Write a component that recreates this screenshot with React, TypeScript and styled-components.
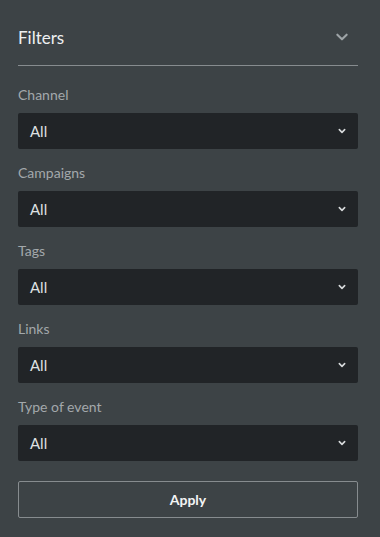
import React from 'react'
import styled, { createGlobalStyle } from 'styled-components'

const GlobalStyle = createGlobalStyle`
  html, body {
    margin: 0;
    padding: 0;
    background: #3d4346;
  }
  body {
    font-family: Lato, "Open Sans", sans-serif;
  }
`

const Panel = styled.div`
  box-sizing: border-box;
  width: 380px;
  min-height: 537px;
  padding: 20px 22px 0 18px;
  background: #3d4346;
`
const Header = styled.div`
  display: flex;
  align-items: center;
  justify-content: space-between;
  height: 34px;
  padding-bottom: 11px;
  border-bottom: 1px solid #878c8f;
`
const Title = styled.h2`
  margin: 0;
  font-size: 17px;
  font-weight: 400;
  color: #eef0f1;
`
const CollapseButton = styled.button`
  display: flex;
  align-items: center;
  justify-content: center;
  width: 24px;
  height: 24px;
  margin-right: 4px;
  padding: 0;
  border: 0;
  background: none;
  color: #9ea4a7;
`
const Fields = styled.div`
  display: flex;
  flex-direction: column;
  gap: 14px;
  padding-top: 19px;
`
const Field = styled.div`
  display: flex;
  flex-direction: column;
  gap: 8px;
`
const Label = styled.label`
  height: 20px;
  line-height: 20px;
  font-size: 14px;
  color: #a3a8ab;
`
const Select = styled.div`
  display: flex;
  align-items: center;
  justify-content: space-between;
  height: 36px;
  padding: 0 12px;
  background: #212427;
  border-radius: 2px;
  font-size: 15px;
  color: #dfe1e2;
`
const Apply = styled.button`
  display: block;
  width: 100%;
  height: 37px;
  margin-top: 20px;
  border: 1px solid #878c8f;
  border-radius: 2px;
  background: transparent;
  font-family: Lato, "Open Sans", sans-serif;
  font-size: 14px;
  font-weight: 700;
  color: #f4f5f5;
`

const Chevron = ({ size, width }: { size: number; width: number }) => (
  <svg width={size} height={size} viewBox="0 0 12 12" fill="none">
    <path
      d="M2 4 L6 8 L10 4"
      stroke="currentColor"
      strokeWidth={width}
      strokeLinecap="round"
      strokeLinejoin="round"
    />
  </svg>
)

const SmallCaret = styled.span`
  display: flex;
  color: #d8dbdc;
`

const filters = ['Channel', 'Campaigns', 'Tags', 'Links', 'Type of event']

const App = () => (
  <>
    <GlobalStyle />
    <Panel>
      <Header>
        <Title>Filters</Title>
        <CollapseButton>
          <Chevron size={14} width={1.8} />
        </CollapseButton>
      </Header>
      <Fields>
        {filters.map((name) => (
          <Field key={name}>
            <Label>{name}</Label>
            <Select>
              All
              <SmallCaret>
                <Chevron size={8} width={2.4} />
              </SmallCaret>
            </Select>
          </Field>
        ))}
      </Fields>
      <Apply>Apply</Apply>
    </Panel>
  </>
)

export default App
